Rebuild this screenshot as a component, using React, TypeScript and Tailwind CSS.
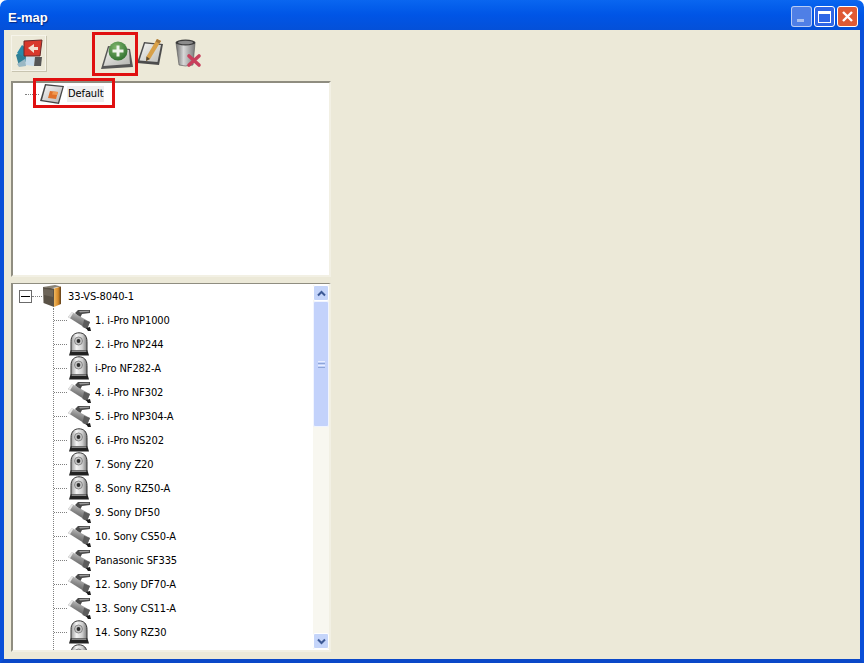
import React from 'react';

const cameras: { label: string; type: 'bullet' | 'dome' }[] = [
  { label: '1. i-Pro NP1000', type: 'bullet' },
  { label: '2. i-Pro NP244', type: 'dome' },
  { label: 'i-Pro NF282-A', type: 'dome' },
  { label: '4. i-Pro NF302', type: 'bullet' },
  { label: '5. i-Pro NP304-A', type: 'bullet' },
  { label: '6. i-Pro NS202', type: 'dome' },
  { label: '7. Sony Z20', type: 'dome' },
  { label: '8. Sony RZ50-A', type: 'dome' },
  { label: '9. Sony DF50', type: 'bullet' },
  { label: '10. Sony CS50-A', type: 'bullet' },
  { label: 'Panasonic SF335', type: 'bullet' },
  { label: '12. Sony DF70-A', type: 'bullet' },
  { label: '13. Sony CS11-A', type: 'bullet' },
  { label: '14. Sony RZ30', type: 'dome' },
  { label: '', type: 'dome' },
];

function BulletCam() {
  return (
    <svg width="24" height="24" viewBox="0 0 24 24">
      <defs>
        <linearGradient id="bulletBody" x1="0.7" y1="0" x2="0.3" y2="1">
          <stop offset="0" stopColor="#d0d0d0" />
          <stop offset="0.45" stopColor="#8e8e8e" />
          <stop offset="1" stopColor="#484848" />
        </linearGradient>
      </defs>
      <path d="M8 5 L11 2 L23 2 L23 5 L15 6 L13 10 Z" fill="#4a4a4a" />
      <path d="M12 3 L22 2.8 L22 3.8 L13 4.4 Z" fill="#9c9c9c" />
      <path d="M1 9 L5 4 L23 14 L20 21 Z" fill="url(#bulletBody)" />
      <path d="M1 9 L5 4 L6.5 4.8 L3 10.2 Z" fill="#e8e8e8" />
      <path d="M17 11.8 L23 14 L20 21 L15.5 19 Z" fill="#5c5c5c" />
      <path d="M19 20 L23 19 L24 23 L21 23 Z" fill="#1a1a1a" />
    </svg>
  );
}

function DomeCam() {
  return (
    <svg width="24" height="24" viewBox="0 0 24 24">
      <defs>
        <linearGradient id="domeBody" x1="0" y1="0" x2="1" y2="0">
          <stop offset="0" stopColor="#9a9a9a" />
          <stop offset="0.35" stopColor="#f4f4f4" />
          <stop offset="0.7" stopColor="#d0d0d0" />
          <stop offset="1" stopColor="#7c7c7c" />
        </linearGradient>
      </defs>
      <path d="M4 19 L4 9.5 C4 3.5 7.5 0.8 12 0.8 C16.5 0.8 20 3.5 20 9.5 L20 19 Z" fill="url(#domeBody)" stroke="#333" strokeWidth="1" />
      <path d="M2 23.5 L3.5 18.5 L20.5 18.5 L22 23.5 Z" fill="#222" />
      <path d="M5 18.5 L19 18.5 L19.5 20 L4.5 20 Z" fill="#888" />
      <circle cx="11.5" cy="9" r="4" fill="#c4c4c4" stroke="#777" strokeWidth="0.8" />
      <circle cx="11.5" cy="9" r="1.9" fill="#2c2c2c" />
    </svg>
  );
}

function Recorder() {
  return (
    <svg width="20" height="24" viewBox="0 0 20 24">
      <defs>
        <linearGradient id="recFront" x1="0" y1="0" x2="1" y2="0">
          <stop offset="0" stopColor="#f0b860" />
          <stop offset="0.6" stopColor="#d68a28" />
          <stop offset="1" stopColor="#5a3c1a" />
        </linearGradient>
      </defs>
      <path d="M1 3 L13 1 L19 2.5 L8 4.5 Z" fill="#8a8478" />
      <path d="M1 3 L12 4.5 L12 23 L1.5 19 Z" fill="#5a5246" />
      <path d="M12 4.5 L19 2.5 L19 20 L12 23 Z" fill="url(#recFront)" />
      <path d="M2 5 L11 6 L11 13 L2 11 Z" fill="#6e665a" />
    </svg>
  );
}

function MapFrame() {
  return (
    <svg width="26" height="22" viewBox="0 0 26 22">
      <defs>
        <linearGradient id="mapPaper" x1="0" y1="0" x2="1" y2="1">
          <stop offset="0" stopColor="#f4f4f4" />
          <stop offset="1" stopColor="#b8b8b8" />
        </linearGradient>
      </defs>
      <path d="M6 1 L25 3 L20 21 L1 18 Z" fill="#444" />
      <path d="M7 2.5 L23.5 4 L19 19.5 L3 17 Z" fill="url(#mapPaper)" />
      <path d="M11 8 L19 9 L17 16 L9 15 Z" fill="#e0702a" />
      <path d="M14 8.5 L19 9 L18 12 L13 11.5 Z" fill="#f09850" />
    </svg>
  );
}

function MapsIcon() {
  return (
    <svg width="32" height="32" viewBox="0 0 32 32">
      <path d="M3 18 L11 12 L14 24 L6 29 Z" fill="#2f7f95" />
      <path d="M4 16 L9 8 L14 12 L11 20 Z" fill="#2a8aa8" />
      <path d="M11 4 L29 3 L27 19 L11 19 Z" fill="#d8382c" stroke="#6a2a2a" strokeWidth="1" />
      <path d="M15 11 L21 7 L21 10 L25 10 L25 13 L21 13 L21 16 Z" fill="#f2e0d0" />
      <path d="M13 20 L22 20 L21 29 L12 28 Z" fill="#c8dcea" />
      <path d="M22 20 L29 20 L28 29 L21 29 Z" fill="#555" />
      <path d="M4 27 L12 22 L13 29 L6 30 Z" fill="#9ab8c4" />
    </svg>
  );
}

function AddMapIcon() {
  return (
    <svg width="36" height="34" viewBox="0 0 36 34">
      <defs>
        <linearGradient id="addBook" x1="0" y1="0" x2="1" y2="1">
          <stop offset="0" stopColor="#f4f4f0" />
          <stop offset="1" stopColor="#b4b4b0" />
        </linearGradient>
        <radialGradient id="addBall" cx="0.4" cy="0.3" r="0.8">
          <stop offset="0" stopColor="#7fb56a" />
          <stop offset="1" stopColor="#2a6a2c" />
        </radialGradient>
      </defs>
      <path d="M9 9 L31 12 L34 30 L2 32 Z" fill="#565656" />
      <path d="M10 10.5 L30 13 L31 27 L4.5 29 Z" fill="url(#addBook)" />
      <circle cx="19" cy="14" r="9.5" fill="url(#addBall)" />
      <path d="M17.5 8.5 H20.5 V12.5 H24.5 V15.5 H20.5 V19.5 H17.5 V15.5 H13.5 V12.5 H17.5 Z" fill="#f0f4ec" />
    </svg>
  );
}

function EditMapIcon() {
  return (
    <svg width="30" height="30" viewBox="0 0 30 30">
      <defs>
        <linearGradient id="editBook" x1="0" y1="0" x2="1" y2="1">
          <stop offset="0" stopColor="#f6f6f2" />
          <stop offset="1" stopColor="#bcbcb8" />
        </linearGradient>
      </defs>
      <path d="M8 4 L27 6 L23 27 L1 25 Z" fill="#4c4c4c" />
      <path d="M9 5.5 L25 7 L21.5 24 L3.5 22.5 Z" fill="url(#editBook)" />
      <path d="M21 1 L25 3 L14 21 L10 23 L10.5 18.5 Z" fill="#d8a048" />
      <path d="M21 1 L25 3 L23.5 5.5 L19.5 3.5 Z" fill="#a87838" />
      <path d="M10.5 18.5 L14 21 L10 23 Z" fill="#5a4a30" />
    </svg>
  );
}

function TrashIcon() {
  return (
    <svg width="30" height="30" viewBox="0 0 30 30">
      <defs>
        <linearGradient id="trashBody" x1="0" y1="0" x2="1" y2="0">
          <stop offset="0" stopColor="#6e6e6e" />
          <stop offset="0.4" stopColor="#d8d8d8" />
          <stop offset="1" stopColor="#7a7a7a" />
        </linearGradient>
      </defs>
      <path d="M2 5 L21 5 L19 27 Q11 29 5 27 Z" fill="url(#trashBody)" stroke="#555" strokeWidth="0.6" />
      <ellipse cx="11.5" cy="4.5" rx="10" ry="3" fill="#3c3c3c" />
      <ellipse cx="11.5" cy="4.5" rx="7.5" ry="1.7" fill="#8c8c8c" />
      <path d="M15 18 L25 27 M25 18 L15 27" stroke="#c8405c" strokeWidth="3.6" strokeLinecap="round" />
    </svg>
  );
}

function ScrollArrow({ up }: { up?: boolean }) {
  return (
    <svg width="9" height="7" viewBox="0 0 9 7">
      <path d={up ? 'M1 5.5 L4.5 2 L8 5.5' : 'M1 1.5 L4.5 5 L8 1.5'} fill="none" stroke="#3d5a96" strokeWidth="2" />
    </svg>
  );
}

export default function App() {
  return (
    <div
      className="w-[864px] h-[663px] flex flex-col overflow-hidden text-[11px] text-black [font-stretch:condensed] tracking-[-0.1px]"
      style={{ fontFamily: '"DejaVu Sans", "Liberation Sans", sans-serif' }}
    >
      {/* Title bar */}
      <div className="h-[30px] shrink-0 flex items-end justify-between pl-2 pr-[6px] pb-[3px] rounded-t-[7px] bg-gradient-to-b from-[#0a66f0] via-[#0055e6] to-[#0450d8]">
        <span
          className="text-white font-bold text-[13px] tracking-normal [text-shadow:1px_1px_1px_#0a2a80]"
          style={{ fontFamily: '"Liberation Sans", sans-serif' }}
        >
          E-map
        </span>
        <div className="flex gap-[2px]">
          <div className="w-[21px] h-[21px] rounded-[3px] border border-white/60 bg-[#4f7fe6] flex items-end pl-[5px] pb-[4px]">
            <div className="w-[7px] h-[3px] bg-[#a9c0ef]" />
          </div>
          <div className="w-[21px] h-[21px] rounded-[3px] border border-white bg-[#2f66e6] flex items-center justify-center">
            <div className="w-[13px] h-[12px] border border-white border-t-[3px]" />
          </div>
          <div className="w-[21px] h-[21px] rounded-[3px] border border-white bg-[#df5a34] flex items-center justify-center">
            <svg width="13" height="13" viewBox="0 0 13 13">
              <path d="M2 2 L11 11 M11 2 L2 11" stroke="#fff" strokeWidth="2.4" />
            </svg>
          </div>
        </div>
      </div>

      {/* Window body */}
      <div className="relative flex-1 min-h-0 bg-[#ece9d8] border-x-[4px] border-b-[4px] border-[#0a4fd8] border-b-[#0a48c8] flex flex-col pl-[7px]">
        {/* Toolbar */}
        <div className="h-[51px] shrink-0 flex items-start pt-[5px]">
          <div className="w-[35px] h-[36px] border border-[#f6f4ea] shadow-[1px_1px_0_#c8c4b0] flex items-center justify-center">
            <MapsIcon />
          </div>
          <div className="ml-[53px] mt-[2px]">
            <AddMapIcon />
          </div>
          <div className="ml-[1px] mt-[3px]">
            <EditMapIcon />
          </div>
          <div className="ml-[8px] mt-[3px]">
            <TrashIcon />
          </div>
        </div>

        {/* Map tree */}
        <div className="w-[320px] h-[196px] shrink-0 bg-white border-2 border-[#8f8d80] border-r-[#f2f0e4] border-b-[#f2f0e4] pl-[12px]">
          <div className="flex items-center h-[22px]">
            <div className="w-[14px] border-t border-dotted border-[#808080]" />
            <MapFrame />
            <span className="ml-[2px] px-[1px] bg-[#efefef]">Default</span>
          </div>
        </div>

        {/* Device tree */}
        <div className="mt-[6px] w-[320px] h-[369px] shrink-0 flex bg-white border-2 border-t border-[#8f8d80] border-r-[#f2f0e4] border-b-[#f2f0e4] overflow-hidden">
          <div className="w-[299px] shrink-0 overflow-hidden pl-[6px]">
            <div className="flex items-center h-[24px]">
              <div className="w-[13px] h-[13px] border border-[#6b6b6b] bg-white flex items-center justify-center">
                <div className="w-[9px] h-[1px] bg-black" />
              </div>
              <div className="w-[10px] border-t border-dotted border-[#808080]" />
              <Recorder />
              <span className="ml-[6px] pt-[2px]">33-VS-8040-1</span>
            </div>
            <div className="ml-[34px] border-l border-dotted border-[#808080]">
              {cameras.map((cam, i) => (
                <div key={i} className="flex items-center h-[24px]">
                  <div className="w-[13px] border-t border-dotted border-[#808080]" />
                  {cam.type === 'bullet' ? <BulletCam /> : <DomeCam />}
                  <span className="ml-[4px] pt-[2px] whitespace-nowrap">{cam.label}</span>
                </div>
              ))}
            </div>
          </div>

          {/* Scrollbar */}
          <div className="w-[16px] ml-[1px] shrink-0 flex flex-col bg-[#f8f7f0] my-[1px]">
            <div className="h-[16px] rounded-[2px] bg-[#c5d5fa] border border-white flex items-center justify-center">
              <ScrollArrow up />
            </div>
            <div className="h-[126px] rounded-[2px] bg-[#c3d2fb] border border-[#f0f4ff] flex flex-col items-center justify-center gap-[1px]">
              <div className="w-[7px] h-[1px] bg-[#e8eeff]" />
              <div className="w-[7px] h-[1px] bg-[#8ea6d8]" />
              <div className="w-[7px] h-[1px] bg-[#e8eeff]" />
              <div className="w-[7px] h-[1px] bg-[#8ea6d8]" />
            </div>
            <div className="flex-1" />
            <div className="h-[16px] rounded-[2px] bg-[#c5d5fa] border border-white flex items-center justify-center">
              <ScrollArrow />
            </div>
          </div>
        </div>

        {/* Red callouts */}
        <div className="absolute left-[88px] top-[2px] w-[46px] h-[44px] border-[3px] border-[#e01010]" />
        <div className="absolute left-[29px] top-[48px] w-[82px] h-[30px] border-[3px] border-[#e01010]" />
      </div>
    </div>
  );
}
